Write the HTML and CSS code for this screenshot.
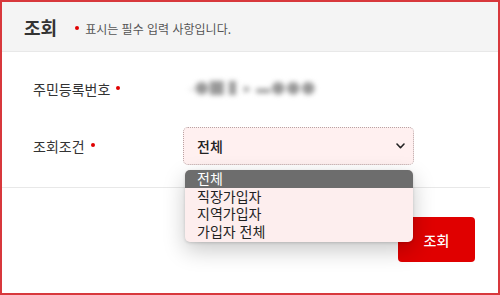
FILE: index.html
```html
<!DOCTYPE html>
<html lang="ko">
<head>
<meta charset="utf-8">
<link rel="stylesheet" href="styles.css">
</head>
<body>
<div class="frame">
  <div class="header">
    <h1 class="title">조회</h1>
    <span class="note"><span class="dot"></span>표시는 필수 입력 사항입니다.</span>
  </div>
  <div class="content">
    <div class="row">
      <div class="label">주민등록번호<span class="dot"></span></div>
      <div class="value blurred">-●█ ▌▸ ▬●●●</div>
    </div>
    <div class="row">
      <div class="label">조회조건<span class="dot"></span></div>
      <div class="select-wrap">
        <div class="select">
          <span class="sel-text">전체</span>
          <svg class="chev" width="9" height="6" viewBox="0 0 9 6"><path d="M1 1 L4.5 4.7 L8 1" fill="none" stroke="#222" stroke-width="1.6" stroke-linecap="round" stroke-linejoin="round"/></svg>
        </div>
        <ul class="menu">
          <li class="active">전체</li>
          <li>직장가입자</li>
          <li>지역가입자</li>
          <li>가입자 전체</li>
        </ul>
      </div>
    </div>
  </div>
  <div class="actions">
    <button class="btn">조회</button>
  </div>
</div>
</body>
</html>
```
FILE: styles.css
```css
* { box-sizing: border-box; }
html, body { margin: 0; padding: 0; background: #fff; }
body { font-family: "Noto Sans CJK KR", "Noto Sans", sans-serif; color: #333; }
.frame {
  width: 500px;
  height: 295px;
  border: 2px solid #d8383c;
  background: #fff;
  overflow: hidden;
}
.header {
  height: 50px;
  background: #f4f4f4;
  border-bottom: 1px solid #e8e8e8;
  display: flex;
  align-items: center;
  padding-left: 22px;
}
.title {
  margin: 0;
  font-size: 18px;
  font-weight: 700;
  color: #333;
  line-height: 1;
}
.note {
  display: flex;
  align-items: center;
  margin-left: 18px;
  margin-top: 3px;
  font-size: 12px;
  color: #555;
}
.note .dot { margin-right: 6px; }
.dot {
  display: inline-block;
  width: 4px;
  height: 4px;
  border-radius: 50%;
  background: #e00000;
}
.content {
  padding: 18px 0 0 31px;
  height: 136px;
  border-bottom: 1px solid #e8e8e8;
  margin: 0 8px 0 0;
}
.row {
  display: grid;
  grid-template-columns: 150px 231px;
  align-items: center;
}
.row + .row { margin-top: 19px; }
.label {
  font-size: 14px;
  color: #333;
  display: flex;
  align-items: center;
  height: 38px;
}
.label .dot { margin-left: 6px; margin-top: -3px; }
.value { font-size: 14px; }
.blurred {
  color: #999;
  filter: blur(2.8px);
  letter-spacing: 1px;
  padding-left: 6px;
  margin-top: -4px;
}
.select-wrap { position: relative; }
.select {
  height: 38px;
  background: #fff0f0;
  border: 1px dotted #b9a3a3;
  border-radius: 5px;
  display: flex;
  align-items: center;
  justify-content: space-between;
  padding: 0 8px 0 13px;
}
.sel-text { font-size: 14px; font-weight: 500; color: #222; }
.chev { display: block; }
.menu {
  position: absolute;
  left: 2px;
  top: 43px;
  width: 228px;
  margin: 0;
  padding: 0 0 2px 0;
  list-style: none;
  background: #fdeeee;
  border-radius: 5px;
  box-shadow: 0 8px 22px rgba(0,0,0,0.22), 0 1px 3px rgba(0,0,0,0.15);
  overflow: hidden;
  z-index: 5;
}
.menu li {
  font-size: 14px;
  line-height: 17.5px;
  height: 17.5px;
  padding-left: 12px;
  color: #222;
}
.menu li.active { background: #6d6d6d; color: #fff; }
.actions {
  display: flex;
  justify-content: flex-end;
  padding: 29px 23px 0 0;
}
.btn {
  width: 77px;
  height: 45px;
  background: #e00000;
  color: #fff;
  border: none;
  border-radius: 4px;
  font-family: inherit;
  font-size: 14px;
  font-weight: 500;
}
```
